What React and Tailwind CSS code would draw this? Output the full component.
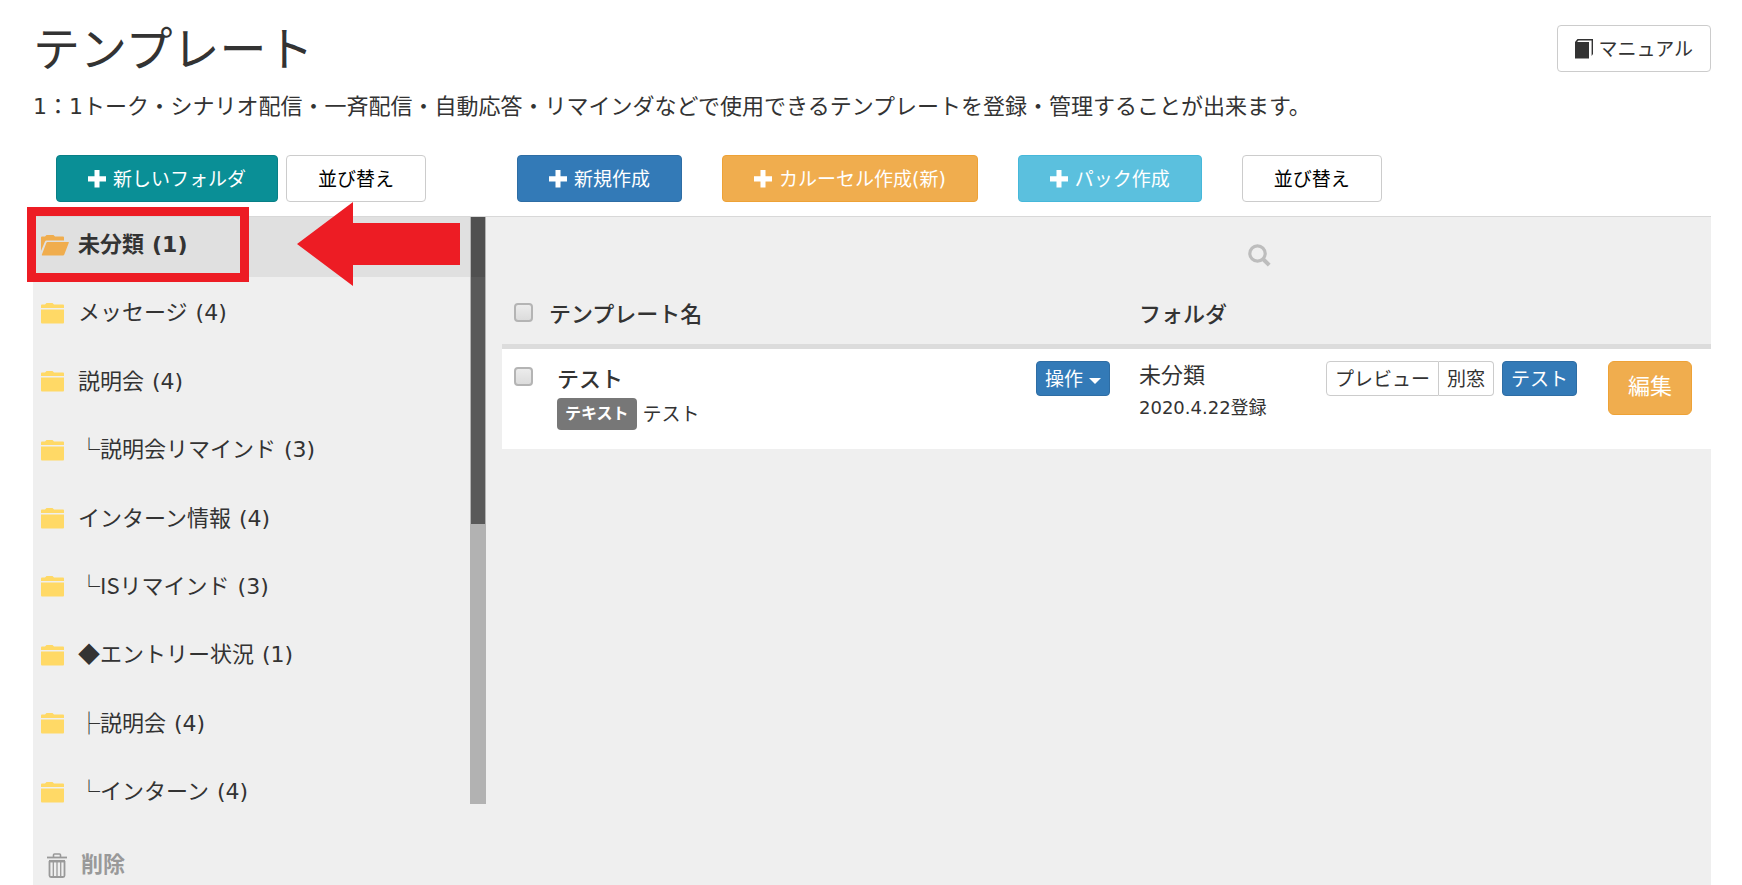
import { useState } from "react";
import clsx from "clsx";

const FOLDERS = [
  { id: 1, name: "未分類", count: 1 },
  { id: 2, name: "メッセージ", count: 4 },
  { id: 3, name: "説明会", count: 4 },
  { id: 4, name: "└説明会リマインド", count: 3 },
  { id: 5, name: "インターン情報", count: 4 },
  { id: 6, name: "└ISリマインド", count: 3 },
  { id: 7, name: "◆エントリー状況", count: 1 },
  { id: 8, name: "├説明会", count: 4 },
  { id: 9, name: "└インターン", count: 4 },
];

const TEMPLATES = [
  {
    id: 1,
    name: "テスト",
    type: "テキスト",
    body: "テスト",
    folder: "未分類",
    date: "2020.4.22登録",
  },
];

export default function App() {
  const [activeFolder, setActiveFolder] = useState(1);

  return (
    <div className="min-h-screen flex flex-col bg-white pl-[33px] pr-[31px] text-[#333] font-['DejaVu_Sans','Noto_Sans_CJK_JP',sans-serif]">
      <header className="flex items-start justify-between pt-[25px]">
        <div>
          <h1 className="text-[47px] leading-[42px] font-normal font-['Noto_Sans_CJK_JP',sans-serif]">
            テンプレート
          </h1>
          <p className="mt-6 text-[22px] leading-[32px]">
            1：1トーク・シナリオ配信・一斉配信・自動応答・リマインダなどで使用できるテンプレートを登録・管理することが出来ます。
          </p>
        </div>
        <a
          href="#manual"
          className="shrink-0 flex items-center gap-[6px] h-[47px] px-[17px] border border-[#ccc] rounded-[4px] text-[19px] leading-[26px]"
        >
          <BookIcon />
          マニュアル
        </a>
      </header>

      {/* Toolbar */}
      <div className="flex pt-8 pb-[14px]">
        <div className="shrink-0 flex gap-2 w-[484px] pl-[23px]">
          <ToolbarButton plus className="bg-[#0a8f96] border-[#087f86] text-white">
            新しいフォルダ
          </ToolbarButton>
          <ToolbarButton className="bg-white border-[#ccc] text-black">
            並び替え
          </ToolbarButton>
        </div>
        <div className="flex gap-10">
          <ToolbarButton plus className="bg-[#337ab7] border-[#2e6da4] text-white">
            新規作成
          </ToolbarButton>
          <ToolbarButton plus className="bg-[#f0ad4e] border-[#eea236] text-white">
            カルーセル作成(新)
          </ToolbarButton>
          <ToolbarButton plus className="bg-[#5bc0de] border-[#46b8da] text-white">
            パック作成
          </ToolbarButton>
          <ToolbarButton className="bg-white border-[#ccc] text-black">
            並び替え
          </ToolbarButton>
        </div>
      </div>

      <main className="flex-1 flex bg-[#efefef] border-t border-[#d8d8d8]">
        {/* Folders */}
        <aside className="shrink-0 w-[453px]">
          <div className="relative flex items-start">
            <ul className="flex-1 flex flex-col justify-between h-[607px]">
              {FOLDERS.map((folder) => (
                <FolderRow
                  key={folder.id}
                  folder={folder}
                  active={folder.id === activeFolder}
                  onClick={() => setActiveFolder(folder.id)}
                />
              ))}
            </ul>
            <div className="w-4 h-[587px] px-px bg-[#b2b2b2]">
              <div className="h-[307px] bg-[#595959]">
                <div className="h-[60px] bg-[#505050]" />
              </div>
            </div>
            <Callout />
          </div>
          <button className="flex items-center gap-[14px] mt-[25px] pl-[14px] text-[22px] leading-[32px] font-bold text-[#999]">
            <TrashIcon />
            削除
          </button>
        </aside>

        {/* Templates */}
        <section className="flex-1 pl-4">
          <div className="flex justify-end h-[68px] pt-[27px] pr-[440px]">
            <button aria-label="検索" className="h-[23px]">
              <SearchIcon />
            </button>
          </div>
          <table className="w-full table-fixed border-separate border-spacing-0 text-left">
            <thead>
              <tr className="h-[64px] text-[22px] leading-[32px]">
                <th className="w-[47px] pl-[12px] pb-1 border-b-[5px] border-[#dcdcdc]">
                  <Checkbox label="すべて選択" />
                </th>
                <th className="font-medium border-b-[5px] border-[#dcdcdc]">テンプレート名</th>
                <th className="w-[103px] border-b-[5px] border-[#dcdcdc]" />
                <th className="w-[187px] font-medium border-b-[5px] border-[#dcdcdc]">フォルダ</th>
                <th className="w-[282px] border-b-[5px] border-[#dcdcdc]" />
                <th className="w-[103px] border-b-[5px] border-[#dcdcdc]" />
              </tr>
            </thead>
            <tbody>
              {TEMPLATES.map((item) => (
                <TemplateRow key={item.id} item={item} />
              ))}
            </tbody>
          </table>
        </section>
      </main>
    </div>
  );
}

function ToolbarButton({ plus, className, children }) {
  return (
    <button
      className={clsx(
        "flex items-center gap-[7px] h-[47px] px-[31px] border rounded-[4px] text-[19px] leading-[26px] whitespace-nowrap",
        className
      )}
    >
      {plus && <PlusIcon />}
      {children}
    </button>
  );
}

function FolderRow({ folder, active, onClick }) {
  return (
    <li>
      <button
        onClick={onClick}
        className={clsx(
          "w-full h-[60px] flex items-center pl-2 pb-1 text-[22px] leading-[32px] text-left",
          active && "bg-[#e0e0e0] font-bold"
        )}
      >
        <span className="w-[37px]">{active ? <FolderOpenIcon /> : <FolderIcon />}</span>
        <span className="flex items-baseline gap-2">
          {/* ruled characters need the full-width glyphs of the CJK font */}
          <span className="leading-none font-['Noto_Sans_CJK_JP',sans-serif]">{folder.name}</span>
          <span>({folder.count})</span>
        </span>
      </button>
    </li>
  );
}

function TemplateRow({ item }) {
  return (
    <tr className="h-[100px] bg-white align-top text-[19px] leading-[26px]">
      <td className="pt-[18px] pl-[12px]">
        <Checkbox label={item.name} />
      </td>
      <td className="pt-[15px] pl-2">
        <div className="text-[22px] leading-[32px] font-medium">{item.name}</div>
        <div className="flex items-center gap-[6px] mt-[2px]">
          <span className="h-8 px-2 rounded-[4px] bg-[#777] text-white text-[16px] leading-[32px] font-bold">
            {item.type}
          </span>
          {item.body}
        </div>
      </td>
      <td className="pt-3">
        <button className="flex items-center gap-[6px] h-[35px] px-2 border border-[#2e6da4] rounded-[4px] bg-[#337ab7] text-white">
          操作
          <CaretIcon />
        </button>
      </td>
      <td className="pt-[11px]">
        <div className="text-[22px] leading-[32px]">{item.folder}</div>
        <div className="text-[18px] leading-[32px]">{item.date}</div>
      </td>
      <td className="pt-3">
        <div className="flex">
          <button className="h-[35px] px-2 border border-[#ccc] rounded-l-[4px]">プレビュー</button>
          <button className="h-[35px] px-2 border border-l-0 border-[#ccc] rounded-r-[4px]">
            別窓
          </button>
          <button className="ml-2 h-[35px] px-2 border border-[#2e6da4] rounded-[4px] bg-[#337ab7] text-white">
            テスト
          </button>
        </div>
      </td>
      <td className="pt-3">
        <button className="h-[54px] px-[19px] pb-[2px] border border-[#eea236] rounded-[6px] bg-[#f0ad4e] text-white text-[22px] leading-[32px]">
          編集
        </button>
      </td>
    </tr>
  );
}

function Checkbox({ label }) {
  return (
    <input
      type="checkbox"
      aria-label={label}
      className="block appearance-none w-[19px] h-[19px] border-2 border-[#b4b4b4] rounded-[4px] bg-linear-to-b from-[#ececec] to-[#dcdcdc] checked:bg-[#337ab7]"
    />
  );
}

function Callout() {
  return (
    <div className="pointer-events-none">
      <div className="absolute -left-[6px] -top-[10px] w-[222px] h-[75px] border-[9px] border-[#ed1c24]" />
      <svg
        className="absolute left-[264px] -top-[15px]"
        width="163"
        height="84"
        viewBox="0 0 163 84"
        fill="#ed1c24"
      >
        <path d="M0 42 56 0v21h107v42H56v21z" />
      </svg>
    </div>
  );
}

function PlusIcon() {
  return (
    <svg width="18" height="18" viewBox="0 0 18 18" fill="currentColor">
      <path d="M6.5 0h5v6.2H18v5.4h-6.5v5.9h-5v-5.900H0V6.200h6.500z" />
    </svg>
  );
}

function BookIcon() {
  return (
    <svg width="18" height="20" viewBox="0 0 18 20" fill="#333">
      <path d="M0 3H14V19.500H0z" />
      <path d="M0 3 2.500 0H18V15L16.600 17V1.600H3.500L2 3z" />
    </svg>
  );
}

function FolderIcon() {
  return (
    <svg width="23" height="21" viewBox="0 0 23 21" fill="#ffd966">
      <path d="M0 5V2.500Q0 1.500 1 1.500H4L5.500 0H11.500L13 1.500H22Q23 1.500 23 2.500V5z" />
      <path d="M0 6.500H23V19.500Q23 20.500 22 20.500H1Q0 20.500 0 19.500z" />
    </svg>
  );
}

function FolderOpenIcon() {
  return (
    <svg width="28" height="21" viewBox="0 0 28 21" fill="#f0ad4e">
      <path d="M0 16V2.500Q0 1.500 1 1.500H4L5.500 0H12.500L14 1.500H22Q23 1.500 23 2.500V5.500H5.500Q4.500 5.500 4 6.500z" />
      <path d="M6.500 7H27.500Q28 7 27.800 7.800L23.300 19.500Q22.900 20.500 22 20.500H1.200Q.5 20.500 .9 19.500L5.400 7.800Q5.700 7 6.500 7z" />
    </svg>
  );
}

function SearchIcon() {
  return (
    <svg width="23" height="23" viewBox="0 0 23 23" fill="none" stroke="#bdbdbd">
      <circle cx="9.500" cy="9.500" r="7.700" strokeWidth="3.200" />
      <path d="m15 15 6.200 6.200" strokeWidth="4" />
    </svg>
  );
}

function CaretIcon() {
  return (
    <svg className="mt-1" width="12" height="6" viewBox="0 0 12 6" fill="currentColor">
      <path d="M0 0h12L6 6z" />
    </svg>
  );
}

function TrashIcon() {
  return (
    <svg width="20" height="25" viewBox="0 0 20 25" fill="none" stroke="#999">
      <path d="M6.500 4V2Q6.500 1 7.500 1H12.500Q13.500 1 13.500 2V4" strokeWidth="1.600" />
      <path d="M0 4.500H20" strokeWidth="1.800" />
      <path d="M2 8.200H18" strokeWidth="2.500" />
      <path d="M2.500 8V22.500Q2.500 24 4 24H16Q17.500 24 17.500 22.500V8" strokeWidth="1.800" />
      <path d="M6.300 9V23M10 9V23M13.700 9V23" strokeWidth="1.300" />
    </svg>
  );
}
